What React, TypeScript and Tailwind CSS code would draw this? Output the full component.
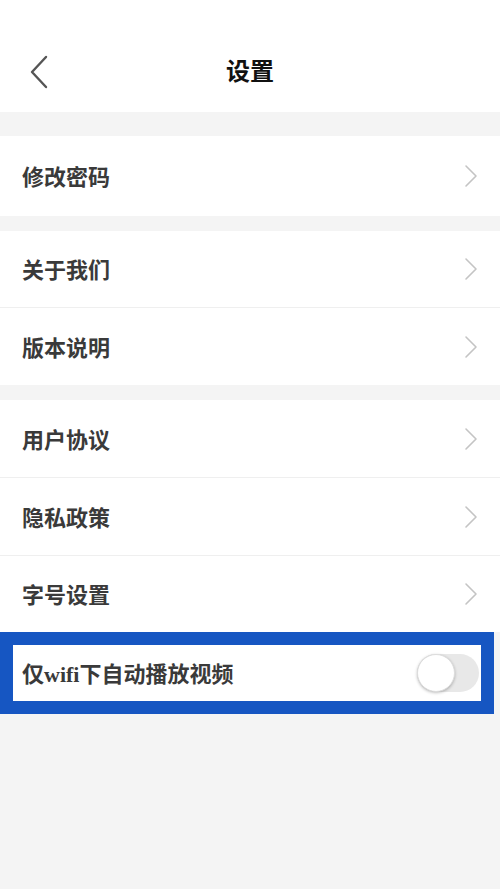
import React from "react";

const font = { fontFamily: '"Liberation Serif", "Noto Sans CJK SC", serif' };

function Chevron() {
  return (
    <svg width="14" height="24" viewBox="0 0 14 24" fill="none">
      <path d="M2 2 L12 12 L2 22" stroke="#c4c4c4" strokeWidth="1.6" strokeLinecap="round" strokeLinejoin="round" />
    </svg>
  );
}

function Row({ label, h = "h-[77px]" }: { label: string; h?: string }) {
  return (
    <div className={`flex items-center justify-between bg-white pl-[22px] pr-[22px] ${h}`}>
      <span className="text-[22px] font-bold text-[#3a3a3a] pt-[3px]">{label}</span>
      <Chevron />
    </div>
  );
}

function Divider() {
  return <div className="h-px bg-[#efefef]" />;
}

export default function App() {
  return (
    <div className="w-[500px] min-h-[889px] bg-[#f4f4f4] flex flex-col" style={font}>
      <div className="h-[112px] bg-white flex items-end pb-[22px] relative">
        <div className="flex items-center w-full h-[36px]">
          <div className="pl-[28px] w-[80px]">
            <svg width="22" height="34" viewBox="0 0 22 34" fill="none">
              <path d="M18 2 L4 17 L18 32" stroke="#555" strokeWidth="2.4" strokeLinecap="round" strokeLinejoin="round" />
            </svg>
          </div>
          <div className="flex-1 text-center text-[24px] font-bold text-[#111] pr-[80px]">设置</div>
        </div>
      </div>
      <div className="h-[24px]" />
      <Row label="修改密码" h="h-[80px]" />
      <div className="h-[15px]" />
      <Row label="关于我们" h="h-[76px]" />
      <Divider />
      <Row label="版本说明" h="h-[77px]" />
      <div className="h-[15px]" />
      <Row label="用户协议" />
      <Divider />
      <Row label="隐私政策" />
      <Divider />
      <Row label="字号设置" h="h-[76px]" />
      <div className="w-[494px] border-[13px] border-[#1656c2] bg-white">
        <div className="h-[56px] flex items-center justify-between pl-[9px] pr-[2px] bg-white">
          <span className="text-[22px] font-bold text-[#3a3a3a] pt-[2px]">仅wifi下自动播放视频</span>
          <div className="w-[62px] h-[38px] rounded-full bg-[#e8e8e8] relative">
            <div className="absolute left-0 top-0 w-[38px] h-[38px] rounded-full bg-white border border-[#ddd] shadow-[0_1px_3px_rgba(0,0,0,0.25)]" />
          </div>
        </div>
      </div>
      <div className="flex-1" />
    </div>
  );
}
